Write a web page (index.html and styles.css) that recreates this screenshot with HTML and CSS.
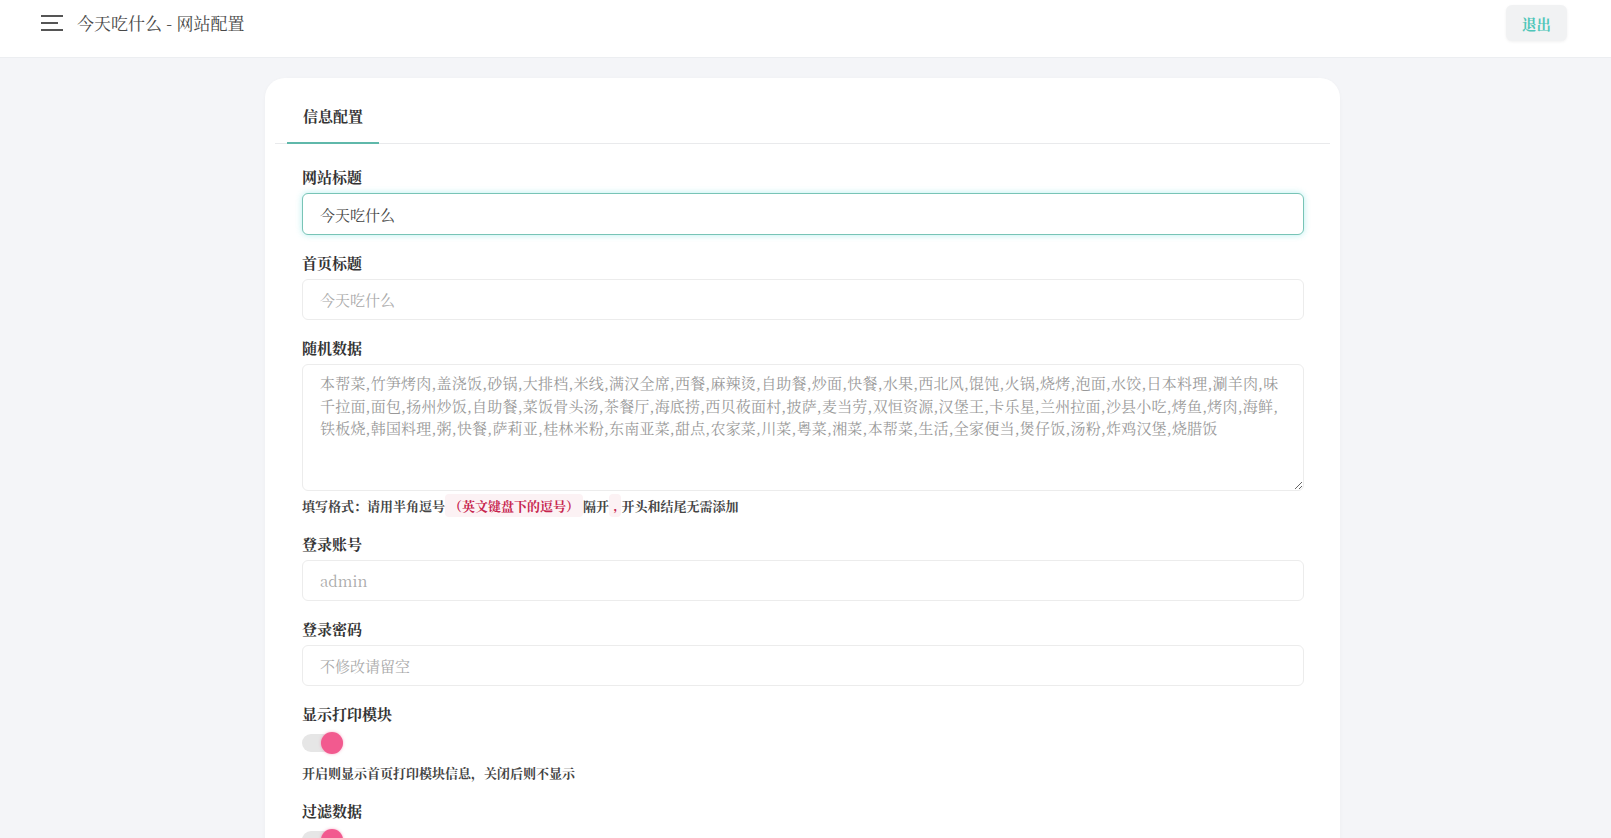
FILE: index.html
```html
<!DOCTYPE html>
<html lang="zh-CN">
<head>
<meta charset="utf-8">
<title>今天吃什么 - 网站配置</title>
<link rel="stylesheet" href="styles.css">
</head>
<body>
<header class="topbar">
  <div class="brand">
    <svg class="menu-icon" width="23" height="18" viewBox="0 0 23 18" aria-hidden="true">
      <rect x="0" y="1" width="22" height="2" fill="#555"/>
      <rect x="0" y="8" width="17" height="2" fill="#555"/>
      <rect x="0" y="15" width="22" height="2" fill="#555"/>
    </svg>
    <span class="site-title">今天吃什么 - 网站配置</span>
  </div>
  <button class="logout" type="button">退出</button>
</header>

<main class="page">
  <section class="card">
    <nav class="tabs">
      <a class="tab active">信息配置</a>
    </nav>
    <form class="form">
      <div class="field">
        <label class="label">网站标题</label>
        <input class="input focused" type="text" value="今天吃什么">
      </div>
      <div class="field">
        <label class="label">首页标题</label>
        <input class="input" type="text" placeholder="今天吃什么">
      </div>
      <div class="field">
        <label class="label">随机数据</label>
        <textarea class="input textarea" placeholder="本帮菜,竹笋烤肉,盖浇饭,砂锅,大排档,米线,满汉全席,西餐,麻辣烫,自助餐,炒面,快餐,水果,西北风,馄饨,火锅,烧烤,泡面,水饺,日本料理,涮羊肉,味千拉面,面包,扬州炒饭,自助餐,菜饭骨头汤,茶餐厅,海底捞,西贝莜面村,披萨,麦当劳,双恒资源,汉堡王,卡乐星,兰州拉面,沙县小吃,烤鱼,烤肉,海鲜,铁板烧,韩国料理,粥,快餐,萨莉亚,桂林米粉,东南亚菜,甜点,农家菜,川菜,粤菜,湘菜,本帮菜,生活,全家便当,煲仔饭,汤粉,炸鸡汉堡,烧腊饭"></textarea>
        <p class="help">填写格式：请用半角逗号<code class="code">（英文键盘下的逗号）</code>隔开<code class="code">,</code>开头和结尾无需添加</p>
      </div>
      <div class="field">
        <label class="label">登录账号</label>
        <input class="input" type="text" placeholder="admin">
      </div>
      <div class="field">
        <label class="label">登录密码</label>
        <input class="input" type="password" placeholder="不修改请留空">
      </div>
      <div class="field">
        <label class="label">显示打印模块</label>
        <span class="switch on"><span class="knob"></span></span>
        <p class="help">开启则显示首页打印模块信息，关闭后则不显示</p>
      </div>
      <div class="field">
        <label class="label">过滤数据</label>
        <span class="switch on"><span class="knob"></span></span>
      </div>
    </form>
  </section>
</main>
</body>
</html>
```

FILE: styles.css
```css
* { box-sizing: border-box; }

html, body {
  margin: 0;
  padding: 0;
}

body {
  background: #f4f5f8;
  font-family: "Noto Serif CJK SC", "Liberation Serif", "Noto Sans CJK SC", serif;
  color: #333;
}

.topbar {
  height: 58px;
  background: #fff;
  border-bottom: 1px solid #eceef1;
  display: flex;
  align-items: flex-start;
  justify-content: space-between;
  padding: 0 44px 0 41px;
}

.brand {
  display: flex;
  align-items: center;
  gap: 13px;
  padding-top: 11px;
}

.menu-icon { display: block; }

.site-title {
  font-size: 17px;
  color: #484848;
  line-height: 24px;
}

.logout {
  height: 36px;
  margin-top: 5px;
  padding: 0 16px;
  border: none;
  border-radius: 6px;
  background: #f1f2f3;
  color: #4fc6b9;
  font-family: inherit;
  font-size: 14.5px;
  font-weight: bold;
  box-shadow: 0 1px 3px rgba(0,0,0,0.06);
}

.page {
  display: flex;
  justify-content: center;
  padding: 20px 6px 0 0;
}

.card {
  width: 1075px;
  background: #fff;
  border-radius: 20px;
  padding: 21px 10px 10px;
  box-shadow: 0 1px 4px rgba(0,0,0,0.03);
}

.tabs {
  display: flex;
  border-bottom: 1px solid #e9eaec;
  padding-left: 12px;
}

.tab {
  display: block;
  padding: 6px 16px 15px;
  font-size: 15px;
  line-height: 22px;
  font-weight: bold;
  color: #333;
  border-bottom: 2px solid #5fb8aa;
  margin-bottom: -1px;
}

.form {
  padding: 23px 26px 0 27px;
}

.field {
  margin-bottom: 18px;
}

.label {
  display: block;
  font-size: 15px;
  line-height: 20px;
  font-weight: bold;
  color: #333;
  margin-bottom: 6px;
}

.input {
  display: block;
  width: 100%;
  height: 41px;
  border: 1px solid #ececec;
  border-radius: 6px;
  padding: 0 17px;
  font-family: inherit;
  font-size: 15px;
  color: #444;
  background: #fff;
  outline: none;
}

.input::placeholder {
  color: #aaa;
}

.input.focused {
  height: 42px;
  border-color: #78c4b6;
  box-shadow: 0 0 6px rgba(90, 220, 220, 0.45);
}

.textarea {
  height: 127px;
  padding: 7px 17px;
  line-height: 22.6px;
  letter-spacing: 0.2px;
  resize: vertical;
}

.textarea::placeholder {
  color: #999;
}

.help {
  margin: 5px 0 0;
  font-size: 13px;
  line-height: 20px;
  font-weight: bold;
  color: #444;
}

.code {
  font-family: inherit;
  font-size: 13px;
  color: #c7254e;
  background: #fcf2f4;
  padding: 2px 4px;
  border-radius: 4px;
}

.switch {
  display: block;
  position: relative;
  width: 41px;
  height: 18px;
  border-radius: 9px;
  background: #e6e6e6;
  margin: 10px 0 0;
}

.switch + .help {
  margin-top: 11px;
}

.knob {
  position: absolute;
  top: -2px;
  right: 0;
  width: 22px;
  height: 22px;
  border-radius: 50%;
  background: #f25a8f;
  box-shadow: 0 0 3px rgba(242, 90, 143, 0.5);
}
```
